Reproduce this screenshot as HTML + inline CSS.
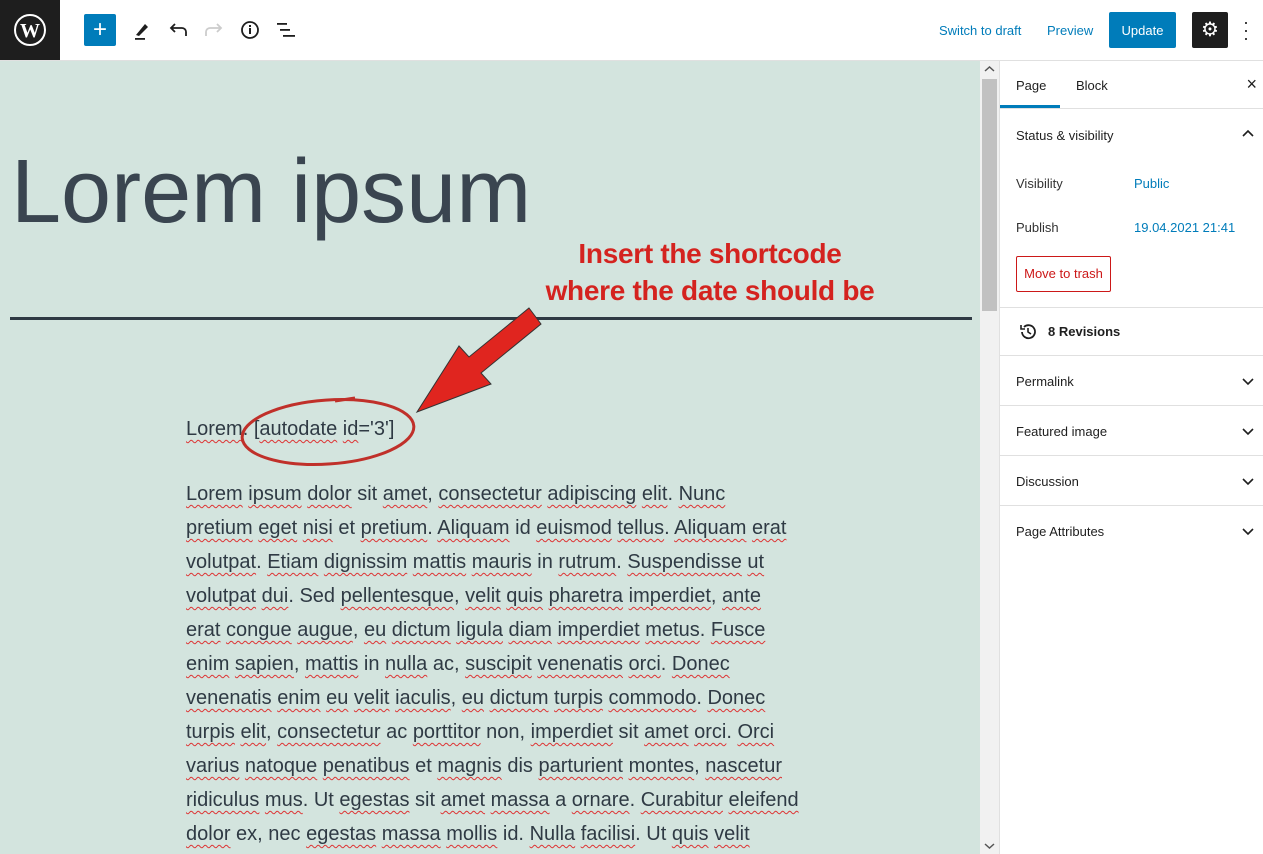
<!DOCTYPE html>
<html><head><style>
*{margin:0;padding:0;box-sizing:border-box}
body{width:1263px;height:854px;overflow:hidden;font-family:"Liberation Sans",sans-serif;background:#fff;position:relative;color:#1e1e1e}
.top{position:absolute;left:0;top:0;width:1263px;height:61px;background:#fff;border-bottom:1px solid #e0e0e0}
.wp{position:absolute;left:0;top:0;width:60px;height:60px;background:#1e1e1e}
.ab{position:absolute;font-size:13px}
.canvas{position:absolute;left:0;top:61px;width:980px;height:793px;background:#d3e4de;overflow:hidden}
.sb{position:absolute;left:980px;top:61px;width:19px;height:793px;background:#f1f1f1}
.side{position:absolute;left:999px;top:61px;width:264px;height:793px;background:#fff;border-left:1px solid #e0e0e0}
.row{position:absolute;left:0;width:264px;border-top:1px solid #e0e0e0;font-size:13px}
.row span{position:absolute;left:16px}
.chev{position:absolute;right:10px}
.body{position:absolute;left:186px;top:477px;font-size:20px;line-height:34px;color:#2f3a44;white-space:nowrap}
.body u,.l u{text-decoration:underline wavy #d33;text-decoration-thickness:1px;text-underline-offset:4px}
</style></head><body>
<div class="top">
 <div class="wp"><svg width="60" height="60" viewBox="0 0 60 60"><circle cx="30" cy="30" r="15" fill="none" stroke="#fff" stroke-width="2"/><text x="30" y="37" font-family="Liberation Serif" font-weight="bold" font-size="20" fill="#fff" text-anchor="middle">W</text></svg></div>
 <div style="position:absolute;left:84px;top:14px;width:32px;height:32px;background:#007cba;border-radius:2px;color:#fff;font-size:24px;line-height:31px;text-align:center">+</div>
 <svg style="position:absolute;left:130px;top:18px" width="24" height="24"><path d="M6 17 L15 6 L18 9 L9 18 Z" fill="#1e1e1e"/><rect x="5" y="20" width="10" height="1.8" fill="#1e1e1e"/></svg>
 <svg style="position:absolute;left:166px;top:18px" width="24" height="24"><path d="M20 18 V14 a4 4 0 0 0-4-4 H5 M9 6 L5 10 L9 14" fill="none" stroke="#1e1e1e" stroke-width="1.8"/></svg>
 <svg style="position:absolute;left:202px;top:18px" width="24" height="24"><path d="M4 18 V14 a4 4 0 0 1 4-4 H19 M15 6 L19 10 L15 14" fill="none" stroke="#ccc" stroke-width="1.8"/></svg>
 <svg style="position:absolute;left:238px;top:18px" width="24" height="24"><circle cx="12" cy="12" r="8" fill="none" stroke="#1e1e1e" stroke-width="1.8"/><rect x="11" y="10" width="2" height="6" fill="#1e1e1e"/><rect x="11" y="7" width="2" height="2" fill="#1e1e1e"/></svg>
 <svg style="position:absolute;left:274px;top:18px" width="24" height="24"><rect x="3" y="5" width="10" height="1.8" fill="#1e1e1e"/><rect x="6" y="11" width="10" height="1.8" fill="#1e1e1e"/><rect x="9" y="17" width="12" height="1.8" fill="#1e1e1e"/></svg>
 <div class="ab" style="left:939px;top:23px;color:#007cba">Switch to draft</div>
 <div class="ab" style="left:1047px;top:23px;color:#007cba">Preview</div>
 <div style="position:absolute;left:1109px;top:12px;width:67px;height:36px;background:#007cba;color:#fff;border-radius:2px;font-size:13px;text-align:center;line-height:38px">Update</div>
 <div style="position:absolute;left:1192px;top:12px;width:36px;height:36px;background:#1e1e1e;border-radius:2px;color:#fff;text-align:center;line-height:36px;font-size:20px">⚙</div>
 <div style="position:absolute;left:1243px;top:18px;font-size:18px;line-height:8px;color:#1e1e1e">·<br>·<br>·</div>
</div>
<div class="canvas">
 <div style="position:absolute;left:11px;top:80px;font-size:90px;font-weight:300;color:#3a4550;letter-spacing:0px">Lorem ipsum</div>
 <div style="position:absolute;left:10px;top:256px;width:962px;height:3px;background:#2f3a44"></div>
 <div style="position:absolute;left:530px;top:174px;width:360px;text-align:center;font-size:28px;font-weight:bold;color:#d4231f;line-height:37px;letter-spacing:-0.3px">Insert the shortcode<br>where the date should be</div>
</div>
<div class="l" style="position:absolute;left:186px;top:418px;font-size:20px;color:#2f3a44"><u>Lorem</u>. [<u>autodate</u> <u>id</u>='3']</div>
<div class="body"><u>Lorem</u> <u>ipsum</u> <u>dolor</u> sit <u>amet</u>, <u>consectetur</u> <u>adipiscing</u> <u>elit</u>. <u>Nunc</u><br><u>pretium</u> <u>eget</u> <u>nisi</u> et <u>pretium</u>. <u>Aliquam</u> id <u>euismod</u> <u>tellus</u>. <u>Aliquam</u> <u>erat</u><br><u>volutpat</u>. <u>Etiam</u> <u>dignissim</u> <u>mattis</u> <u>mauris</u> in <u>rutrum</u>. <u>Suspendisse</u> <u>ut</u><br><u>volutpat</u> <u>dui</u>. Sed <u>pellentesque</u>, <u>velit</u> <u>quis</u> <u>pharetra</u> <u>imperdiet</u>, <u>ante</u><br><u>erat</u> <u>congue</u> <u>augue</u>, <u>eu</u> <u>dictum</u> <u>ligula</u> <u>diam</u> <u>imperdiet</u> <u>metus</u>. <u>Fusce</u><br><u>enim</u> <u>sapien</u>, <u>mattis</u> in <u>nulla</u> ac, <u>suscipit</u> <u>venenatis</u> <u>orci</u>. <u>Donec</u><br><u>venenatis</u> <u>enim</u> <u>eu</u> <u>velit</u> <u>iaculis</u>, <u>eu</u> <u>dictum</u> <u>turpis</u> <u>commodo</u>. <u>Donec</u><br><u>turpis</u> <u>elit</u>, <u>consectetur</u> ac <u>porttitor</u> non, <u>imperdiet</u> sit <u>amet</u> <u>orci</u>. <u>Orci</u><br><u>varius</u> <u>natoque</u> <u>penatibus</u> et <u>magnis</u> dis <u>parturient</u> <u>montes</u>, <u>nascetur</u><br><u>ridiculus</u> <u>mus</u>. Ut <u>egestas</u> sit <u>amet</u> <u>massa</u> a <u>ornare</u>. <u>Curabitur</u> <u>eleifend</u><br><u>dolor</u> ex, nec <u>egestas</u> <u>massa</u> <u>mollis</u> id. <u>Nulla</u> <u>facilisi</u>. Ut <u>quis</u> <u>velit</u></div>
<svg style="position:absolute;left:0;top:0" width="980" height="854">
 <ellipse cx="328" cy="432" rx="86" ry="32" fill="none" stroke="#c0302a" stroke-width="3" transform="rotate(-4 328 432)"/>
 <path d="M335 401 L355 398" stroke="#c0302a" stroke-width="3"/>
 <polygon points="529,308 541,324 481,373 491,384 417,412 459,346 469,357" fill="#e0251f" stroke="#333" stroke-width="1"/>
</svg>
<div class="sb"><div style="position:absolute;left:2px;top:18px;width:15px;height:232px;background:#c1c1c1"></div>
 <svg style="position:absolute;left:4px;top:4px" width="11" height="8"><path d="M1 6 L5.5 2 L10 6" fill="none" stroke="#555" stroke-width="1.5"/></svg>
 <svg style="position:absolute;left:4px;bottom:4px" width="11" height="8"><path d="M1 2 L5.5 6 L10 2" fill="none" stroke="#555" stroke-width="1.5"/></svg></div>
<div class="side">
 <div style="position:absolute;left:16px;top:17px;font-size:13px">Page</div>
 <div style="position:absolute;left:76px;top:17px;font-size:13px">Block</div>
 <div style="position:absolute;left:0;top:44px;width:60px;height:3px;background:#007cba"></div>
 <div style="position:absolute;right:6px;top:13px;font-size:18px">×</div>
 <div class="row" style="top:47px;height:260px">
  <span style="top:19px">Status &amp; visibility</span><svg class="chev" style="top:20px" width="12" height="8"><path d="M1 7 L6 2 L11 7" fill="none" stroke="#1e1e1e" stroke-width="1.6"/></svg>
  <span style="top:67px;color:#333">Visibility</span><span style="top:67px;left:134px;color:#007cba">Public</span>
  <span style="top:111px;color:#333">Publish</span><span style="top:111px;left:134px;color:#007cba">19.04.2021 21:41</span>
  <div style="position:absolute;left:16px;top:147px;width:95px;height:36px;border:1px solid #cc1818;border-radius:2px;color:#cc1818;font-size:13px;text-align:center;line-height:34px">Move to trash</div>
 </div>
 <div class="row" style="top:246px;height:48px"><span style="top:16px;font-weight:bold;left:48px">8 Revisions</span>
  <svg style="position:absolute;left:18px;top:14px" width="20" height="20"><path d="M4 10 a6.5 6.5 0 1 0 2-5" fill="none" stroke="#1e1e1e" stroke-width="1.8"/><path d="M3 3 V7 H7" fill="none" stroke="#1e1e1e" stroke-width="1.6"/><path d="M10 6 V10 L13 12" fill="none" stroke="#1e1e1e" stroke-width="1.6"/></svg></div>
 <div class="row" style="top:294px;height:50px"><span style="top:18px">Permalink</span><svg class="chev" style="top:22px" width="12" height="8"><path d="M1 1 L6 6 L11 1" fill="none" stroke="#1e1e1e" stroke-width="1.6"/></svg></div>
 <div class="row" style="top:344px;height:50px"><span style="top:18px">Featured image</span><svg class="chev" style="top:22px" width="12" height="8"><path d="M1 1 L6 6 L11 1" fill="none" stroke="#1e1e1e" stroke-width="1.6"/></svg></div>
 <div class="row" style="top:394px;height:50px"><span style="top:18px">Discussion</span><svg class="chev" style="top:22px" width="12" height="8"><path d="M1 1 L6 6 L11 1" fill="none" stroke="#1e1e1e" stroke-width="1.6"/></svg></div>
 <div class="row" style="top:444px;height:50px"><span style="top:18px">Page Attributes</span><svg class="chev" style="top:22px" width="12" height="8"><path d="M1 1 L6 6 L11 1" fill="none" stroke="#1e1e1e" stroke-width="1.6"/></svg></div>
</div>
</body></html>
